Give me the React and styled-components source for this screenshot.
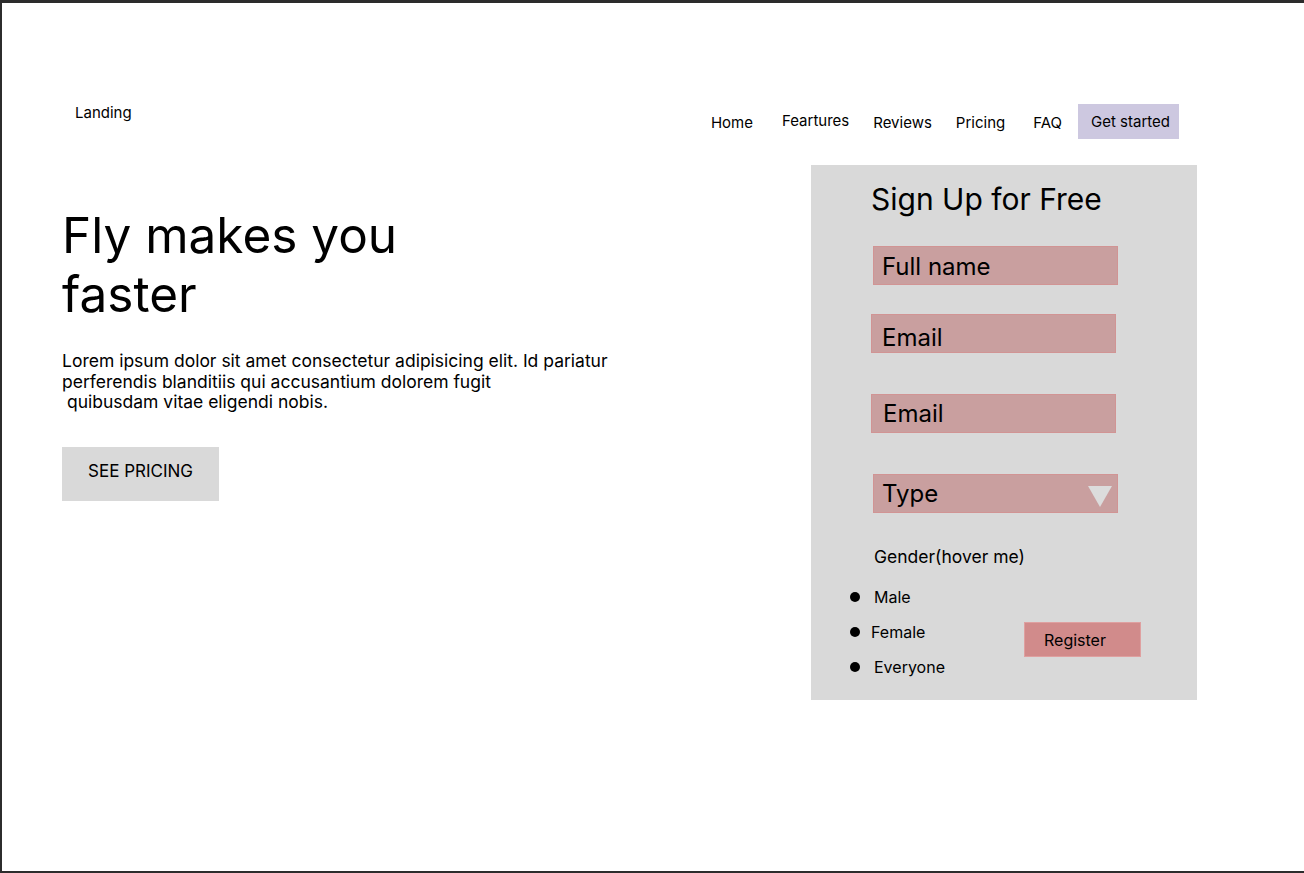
import React from "react";
import styled, { createGlobalStyle } from "styled-components";

const GlobalStyle = createGlobalStyle`
  html, body {
    margin: 0;
    padding: 0;
    background: #ffffff;
  }
  body {
    font-family: Inter, "Noto Sans", sans-serif;
    color: #000000;
  }
  * {
    box-sizing: border-box;
  }
`;

const Frame = styled.div`
  width: 1304px;
  height: 873px;
  overflow: hidden;
  background: #ffffff;
  border-top: 3px solid #2c2c2c;
  border-left: 2px solid #2c2c2c;
  border-bottom: 2px solid #2c2c2c;
`;

const Header = styled.header`
  display: flex;
  justify-content: space-between;
  align-items: flex-start;
  padding: 101px 125px 0 73px;
`;

const Logo = styled.div`
  font-size: 15px;
  line-height: 18px;
`;

const Nav = styled.nav`
  display: flex;
  align-items: center;
  height: 35px;
`;

const NavLink = styled.a`
  font-size: 15px;
  line-height: 18px;
  color: #000;
  text-decoration: none;
  margin-left: ${(p) => p.$gap || 0}px;
  transform: translateY(${(p) => (p.$lift ? -1 : 1)}px);
`;

const CtaButton = styled.button`
  height: 35px;
  margin-left: 16px;
  padding: 0 9px 0 13px;
  border: none;
  background: #cdc8e0;
  font-family: inherit;
  font-size: 15px;
  color: #000;
`;

const Main = styled.main`
  display: flex;
  justify-content: space-between;
  align-items: flex-start;
  padding: 26px 107px 0 60px;
`;

const Hero = styled.section`
  margin-top: 41px;
  width: 600px;
`;

const Title = styled.h1`
  margin: 0;
  width: 420px;
  font-size: 49.5px;
  font-weight: 400;
  line-height: 59px;
`;

const Lead = styled.p`
  margin: 27px 0 0;
  font-size: 17.5px;
  line-height: 20.5px;
  white-space: nowrap;
`;

const PricingButton = styled.button`
  display: block;
  margin-top: 34px;
  width: 157px;
  height: 54px;
  padding: 0 0 5px;
  border: none;
  background: #d9d9d9;
  font-family: inherit;
  font-size: 17px;
  color: #000;
`;

const Panel = styled.section`
  width: 386px;
  height: 535px;
  background: #d9d9d9;
  padding-top: 16px;
`;

const PanelTitle = styled.h2`
  margin: 0 0 0 60px;
  font-size: 30px;
  font-weight: 400;
  line-height: 36px;
`;

const Field = styled.div`
  position: relative;
  width: 245px;
  height: 39px;
  margin: ${(p) => p.$top}px 0 0 ${(p) => p.$left}px;
  padding: ${(p) => p.$textTop}px 0 0 ${(p) => p.$textLeft}px;
  background: #c99f9f;
  border: 1px solid #d19494;
  font-size: 24px;
  line-height: 29px;
`;

const Arrow = styled.span`
  position: absolute;
  right: 5px;
  top: 11px;
  width: 0;
  height: 0;
  border-left: 12px solid transparent;
  border-right: 12px solid transparent;
  border-top: 21px solid #dcdcdc;
`;

const GenderLabel = styled.div`
  margin: 34px 0 0 63px;
  font-size: 17.5px;
  line-height: 20px;
`;

const BottomRow = styled.div`
  display: flex;
  align-items: flex-start;
  margin-top: 12px;
`;

const GenderList = styled.ul`
  list-style: none;
  margin: 0;
  padding: 0 0 0 39px;
  width: 213px;
`;

const GenderItem = styled.li`
  display: flex;
  align-items: center;
  height: 35px;
  font-size: 16px;

  &::before {
    content: "";
    width: 10px;
    height: 10px;
    border-radius: 50%;
    background: #000;
    margin-right: ${(p) => p.$space || 14}px;
  }
`;

const RegisterButton = styled.button`
  width: 117px;
  height: 35px;
  margin-top: 43px;
  padding: 0 0 0 19px;
  text-align: left;
  border: 1px solid #dfa0a0;
  background: #d18b8b;
  font-family: inherit;
  font-size: 16px;
  color: #000;
`;

const navItems = [
  { label: "Home", gap: 0 },
  { label: "Feartures", gap: 29, lift: true },
  { label: "Reviews", gap: 24 },
  { label: "Pricing", gap: 24 },
  { label: "FAQ", gap: 28 },
];

const genders = [
  { label: "Male", space: 14 },
  { label: "Female", space: 11 },
  { label: "Everyone", space: 14 },
];

export default function App() {
  return (
    <>
      <GlobalStyle />
      <Frame>
        <Header>
          <Logo>Landing</Logo>
          <Nav>
            {navItems.map((item) => (
              <NavLink key={item.label} $gap={item.gap} $lift={item.lift}>
                {item.label}
              </NavLink>
            ))}
            <CtaButton>Get started</CtaButton>
          </Nav>
        </Header>

        <Main>
          <Hero>
            <Title>Fly makes you faster</Title>
            <Lead>
              Lorem ipsum dolor sit amet consectetur adipisicing elit. Id pariatur
              <br />
              perferendis blanditiis qui accusantium dolorem fugit
              <br />
              &nbsp;quibusdam vitae eligendi nobis.
            </Lead>
            <PricingButton>SEE PRICING</PricingButton>
          </Hero>

          <Panel>
            <PanelTitle>Sign Up for Free</PanelTitle>
            <Field $top={29} $left={62} $textTop={5} $textLeft={8}>
              Full name
            </Field>
            <Field $top={29} $left={60} $textTop={8} $textLeft={10}>
              Email
            </Field>
            <Field $top={41} $left={60} $textTop={4} $textLeft={11}>
              Email
            </Field>
            <Field $top={41} $left={62} $textTop={4} $textLeft={8}>
              Type
              <Arrow />
            </Field>
            <GenderLabel>Gender(hover me)</GenderLabel>
            <BottomRow>
              <GenderList>
                {genders.map((g) => (
                  <GenderItem key={g.label} $space={g.space}>
                    {g.label}
                  </GenderItem>
                ))}
              </GenderList>
              <RegisterButton>Register</RegisterButton>
            </BottomRow>
          </Panel>
        </Main>
      </Frame>
    </>
  );
}
